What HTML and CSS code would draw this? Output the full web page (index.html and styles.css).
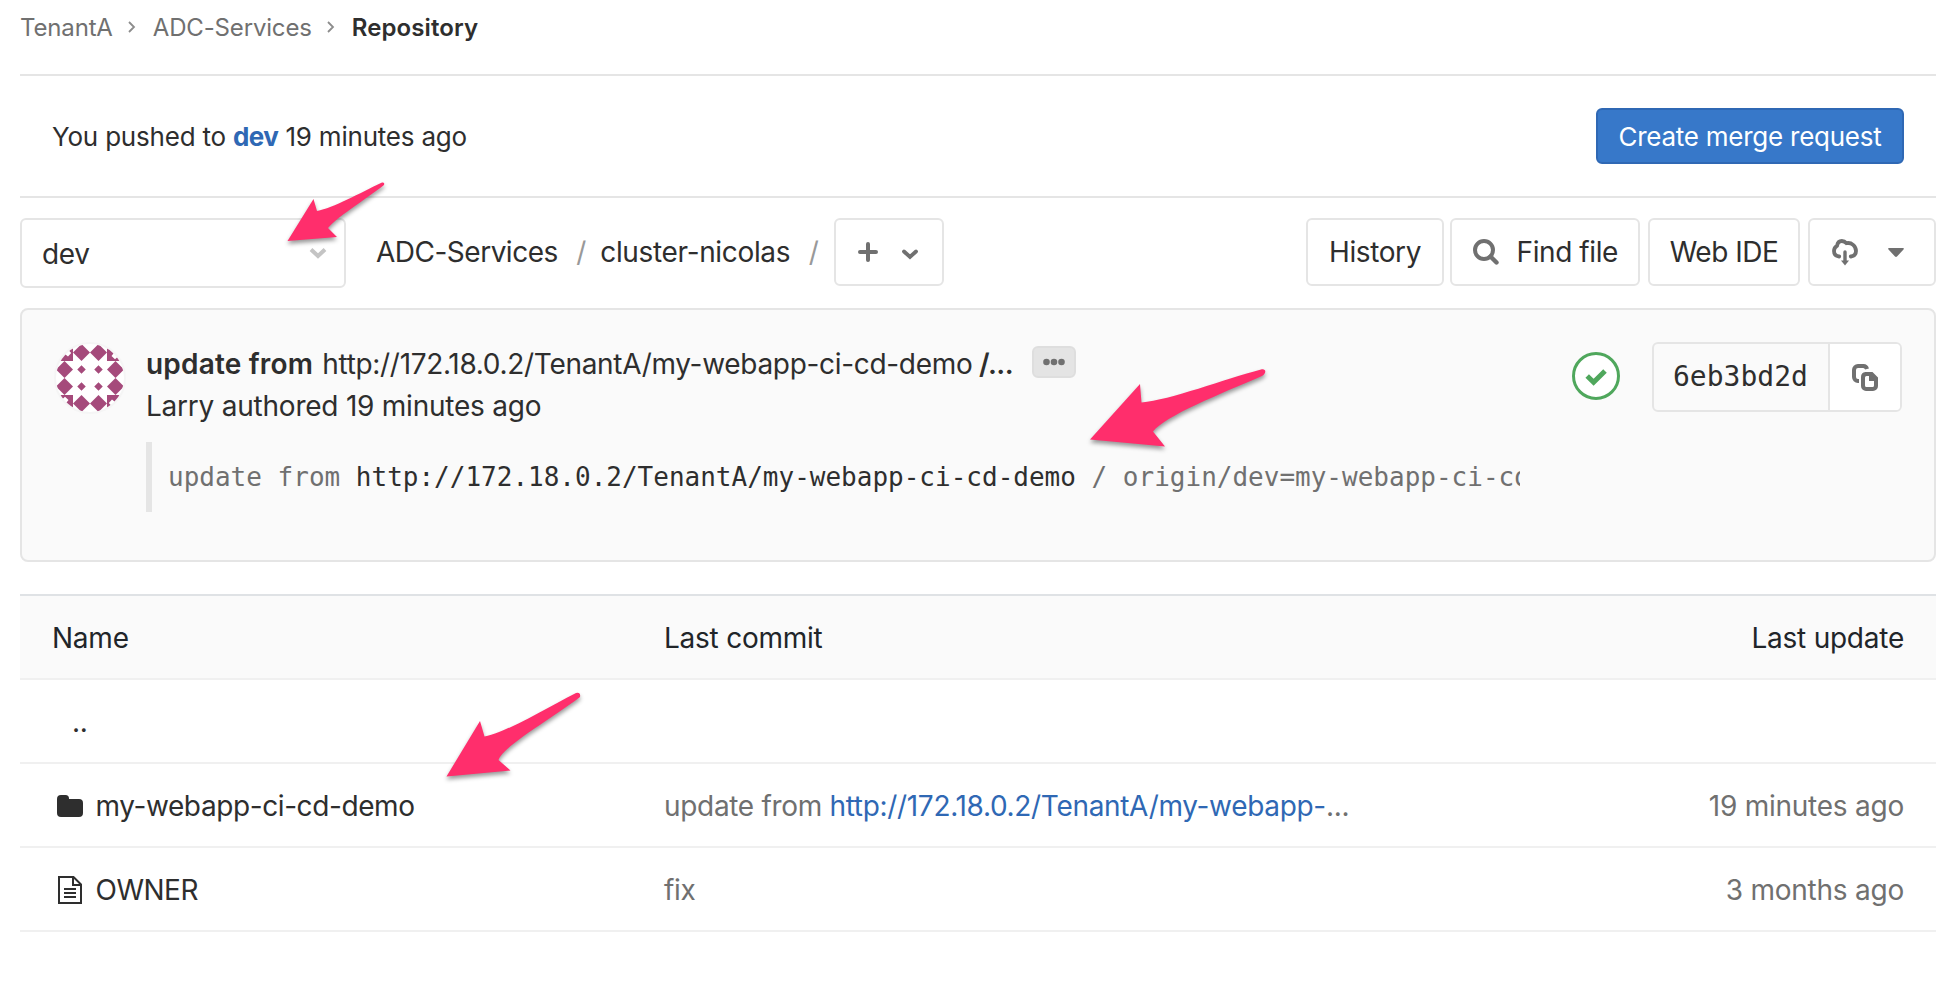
FILE: index.html
```html
<!DOCTYPE html>
<html lang="en">
<head>
<meta charset="utf-8">
<title>Repository</title>
<link rel="stylesheet" href="styles.css">
</head>
<body>
<main class="page">
  <nav class="crumbs">
    <a class="crumb-tenant">TenantA</a>
    <svg class="crumb-sep" width="8" height="12" viewBox="0 0 8 12"><path d="M1 1l5 5-5 5" fill="none" stroke="#8c8c8c" stroke-width="1.8"/></svg>
    <a class="crumb-project">ADC-Services</a>
    <svg class="crumb-sep" width="8" height="12" viewBox="0 0 8 12"><path d="M1 1l5 5-5 5" fill="none" stroke="#8c8c8c" stroke-width="1.8"/></svg>
    <strong class="crumb-current">Repository</strong>
  </nav>

  <section class="push-event">
    <p class="push-text">You pushed to <a class="branch-link">dev</a> 19 minutes ago</p>
    <button class="btn btn-primary">Create merge request</button>
  </section>

  <section class="tree-nav">
    <div class="branch-select"><span class="branch-name">dev</span>
      <svg width="18" height="12" viewBox="0 0 18 12"><path d="M2 2.5l7 6.5 7-6.5" fill="none" stroke="#c4c4c4" stroke-width="4"/></svg>
    </div>
    <div class="path">
      <span class="path-root">ADC-Services</span><span class="slash">/</span><span class="path-dir">cluster-nicolas</span><span class="slash">/</span>
    </div>
    <button class="btn btn-add">
      <svg width="20" height="20" viewBox="0 0 20 20"><path d="M10 2v16M2 10h16" stroke="#707070" stroke-width="4" stroke-linecap="round"/></svg>
      <svg class="chev" width="16" height="11" viewBox="0 0 16 11"><path d="M2 2.5l6 5.5 6-5.5" fill="none" stroke="#707070" stroke-width="3.8" stroke-linecap="round"/></svg>
    </button>
    <div class="actions">
      <button class="btn btn-history">History</button>
      <button class="btn btn-find">
        <svg width="26" height="26" viewBox="0 0 26 26"><circle cx="11" cy="11" r="9" fill="none" stroke="#707070" stroke-width="4"/><path d="M17.5 17.5l6 6" stroke="#707070" stroke-width="4.4" stroke-linecap="round"/></svg>
        <span>Find file</span>
      </button>
      <button class="btn btn-ide">Web IDE</button>
      <button class="btn btn-download">
        <svg width="26" height="27" viewBox="0 0 26 27"><path d="M7.2 17.5C3.8 17 2 14.8 2 12c0-2.400 1.200-4.200 3-5.200C5.600 3.800 7 2 9.800 2c2.400 0 3.800 1.200 4.700 2.200C19.500 3.200 24 7 24 12c0 3-2 5-5.200 5.500" fill="none" stroke="#707070" stroke-width="3.800" stroke-linecap="round"/><path d="M13 13v9" stroke="#707070" stroke-width="3.400" stroke-linecap="round"/><path d="M9 21.500h8l-4 5z" fill="#707070"/></svg>
        <svg class="caret" width="16" height="9" viewBox="0 0 16 9"><path d="M1 0h14q1.500.5.500 1.500L9 8.500q-1 .8-2 0L.5 1.500Q-.5.5 1 0z" fill="#707070"/></svg>
      </button>
    </div>
  </section>

  <section class="commit">
    <svg class="avatar" width="72" height="72" viewBox="-2 -2 72 72">
      <defs>
        <clipPath id="round"><circle cx="34" cy="34" r="34"/></clipPath>
        <path id="dia" d="M8.500 0L17 8.500 8.500 17 0 8.500z"/>
        <path id="dot" d="M8.500 4.250L12.750 8.500 8.500 12.750 4.250 8.500z"/>
        <path id="corner" fill-rule="evenodd" d="M0 0h17v17H0zM12 5.500l3.200 3.500-3.200 3.500L7.500 9z"/>
      </defs>
      <circle cx="34" cy="34" r="35" fill="#fff" stroke="#f5f5f5" stroke-width="2"/>
      <g clip-path="url(#round)" fill="#a54a7b">
        <use href="#corner"/>
        <use href="#corner" transform="rotate(90 34 34)"/>
        <use href="#corner" transform="rotate(180 34 34)"/>
        <use href="#corner" transform="rotate(270 34 34)"/>
        <use href="#dia" x="17"/><use href="#dia" x="34"/>
        <use href="#dia" y="17"/><use href="#dot" x="17" y="17"/><use href="#dot" x="34" y="17"/><use href="#dia" x="51" y="17"/>
        <use href="#dia" y="34"/><use href="#dot" x="17" y="34"/><use href="#dot" x="34" y="34"/><use href="#dia" x="51" y="34"/>
        <use href="#dia" x="17" y="51"/><use href="#dia" x="34" y="51"/>
      </g>
    </svg>
    <div class="commit-body">
      <div class="commit-title">
        <strong class="title-bold">update from</strong>
        <span class="title-url">http://172.18.0.2/TenantA/my-webapp-ci-cd-demo</span>
        <strong class="title-tail">/...</strong>
        <button class="expander"><svg width="24" height="8" viewBox="0 0 24 8"><g fill="#707070"><circle cx="4.500" cy="4" r="3.300"/><circle cx="12" cy="4" r="3.300"/><circle cx="19.500" cy="4" r="3.300"/></g></svg></button>
      </div>
      <div class="commit-author">Larry authored 19 minutes ago</div>
      <pre class="commit-message">update from <b>http://172.18.0.2/TenantA/my-webapp-ci-cd-demo</b> / origin/dev=my-webapp-ci-cd-demo</pre>
    </div>
    <svg class="status" width="48" height="48" viewBox="0 0 48 48"><circle cx="24" cy="24" r="22.500" fill="#fff" stroke="#4fa75c" stroke-width="3"/><path d="M15.200 24l6.400 6.300L33 19" fill="none" stroke="#4fa75c" stroke-width="5"/></svg>
    <div class="sha-group">
      <code class="sha">6eb3bd2d</code>
      <button class="copy">
        <svg width="26" height="27" viewBox="0 0 26 27"><path d="M7 17H6a4 4 0 0 1-4-4V6a4 4 0 0 1 4-4h5a4 4 0 0 1 4 3" fill="none" stroke="#707070" stroke-width="4"/><path fill="#707070" fill-rule="evenodd" d="M13.500 8h7l5.500 5.500V22a5 5 0 0 1-5 5h-7a5 5 0 0 1-5-5v-9a5 5 0 0 1 4.500-5zM14.500 12a1.500 1.500 0 0 0-1.500 1.500v8a1.500 1.500 0 0 0 1.500 1.500h6a1.500 1.500 0 0 0 1.500-1.500V17h-5v-5z"/></svg>
      </button>
    </div>
  </section>

  <table class="tree">
    <thead>
      <tr><th class="col-name">Name</th><th class="col-commit">Last commit</th><th class="col-date">Last update</th></tr>
    </thead>
    <tbody>
      <tr><td class="up">..</td><td></td><td></td></tr>
      <tr>
        <td><div class="entry"><svg width="26" height="22" viewBox="0 0 26 22"><path fill="#2e2e2e" d="M4 0h4.500a3.500 3.500 0 0 1 3.500 3.500V4h10a4 4 0 0 1 4 4v10a4 4 0 0 1-4 4H4a4 4 0 0 1-4-4V4a4 4 0 0 1 4-4z"/></svg><span class="entry-folder">my-webapp-ci-cd-demo</span></div></td>
        <td class="muted">update from <a class="row-link">http://172.18.0.2/TenantA/my-webapp-</a>...</td>
        <td class="muted date">19 minutes ago</td>
      </tr>
      <tr>
        <td><div class="entry"><svg width="26" height="28" viewBox="0 0 26 28"><g fill="none" stroke="#2e2e2e" stroke-width="2"><path d="M2 1h14.500L24 8.500V27H2z"/><path d="M16 1v8h8"/><path d="M7 13h12M7 17h12M7 21h12"/></g></svg><span class="entry-file">OWNER</span></div></td>
        <td class="muted">fix</td>
        <td class="muted date">3 months ago</td>
      </tr>
    </tbody>
  </table>

  <svg class="arrows" width="1942" height="982" viewBox="0 0 1942 982">
    <g fill="#ff2e6c">
      <path d="M287.500 241L313.500 199 317 211C333 208 360 193 382 182.500Q385 182 384 185C362 202 337 217 328 228L337 237z"/>
      <path d="M1090 439.500L1140 384 1141.500 402.500C1170 400 1225 379 1261 369.500C1266 368 1267 373 1262 376C1220 394 1165 416 1153 431.500L1165 446.500z"/>
      <path d="M446.500 776.500L480 721 484.500 736.500C505 733 545 709 576 693Q581 692 580 697C550 720 503 746 498.500 760L510.500 770.500z"/>
    </g>
  </svg>
</main>
</body>
</html>
```
FILE: styles.css
```css
* { box-sizing: border-box; }
body { margin: 0; background: #fff; color: #2e2e2e; font-family: Inter, "Liberation Sans", sans-serif; font-size: 28px; }
button { font: inherit; color: inherit; margin: 0; padding: 0; }
svg { display: block; flex: none; }
.page { width: 1942px; height: 982px; padding: 0 6px 0 20px; overflow: hidden; position: relative; }

.crumbs { display: flex; align-items: center; height: 76px; padding-bottom: 20px; border-bottom: 2px solid #e5e5e5; font-size: 24px; color: #707070; white-space: nowrap; letter-spacing: -.16px; }
.crumb-sep { margin: 0 17px 0 15px; }
.crumb-current { color: #2e2e2e; font-weight: 600; letter-spacing: .1px; }

.push-event { display: flex; align-items: center; justify-content: space-between; height: 122px; padding: 0 32px; border-bottom: 2px solid #e5e5e5; font-size: 26px; }
.push-text { margin: 0; white-space: nowrap; letter-spacing: -.2px; }
.branch-link { color: #2f68b4; font-weight: 700; letter-spacing: -.6px; }
.btn { display: flex; align-items: center; height: 68px; border: 2px solid #e5e5e5; border-radius: 6px; background: #fff; white-space: nowrap; letter-spacing: -.4px; }
.btn-primary { width: 308px; height: 56px; justify-content: center; background: #3778c9; border-color: #2f68b4; color: #fff; letter-spacing: -.25px; }

.tree-nav { display: flex; height: 110px; padding-top: 20px; align-items: flex-start; }
.branch-select { display: flex; align-items: center; justify-content: space-between; width: 326px; height: 70px; padding: 0 17px 0 20px; border: 2px solid #e5e5e5; border-radius: 6px; }
.branch-name { padding-top: 2px; letter-spacing: -.3px; }
.path { display: flex; align-items: center; width: 488px; height: 68px; padding-left: 30px; white-space: nowrap; }
.path-root { letter-spacing: -.5px; }
.path-dir { letter-spacing: -.34px; }
.slash { width: 42.5px; padding-left: 18.5px; color: #999; }
.btn-add { width: 110px; padding-left: 22px; gap: 24px; }
.chev { margin-top: 5px; }
.actions { display: flex; margin-left: auto; }
.btn-history { width: 138px; justify-content: center; margin-right: 6px; }
.btn-find { width: 190px; padding-left: 21px; gap: 17.5px; margin-right: 8px; }
.btn-ide { width: 152px; justify-content: center; margin-right: 8px; letter-spacing: -.5px; }
.btn-download { width: 128px; padding-left: 22px; gap: 30px; }
.caret { margin-top: 1px; }

.commit { display: flex; height: 254px; padding: 32px 32px 0 32px; border: 2px solid #e5e5e5; border-radius: 8px; background: #fafafa; }
.avatar { margin: 0 20px 0 0; }
.commit-body { width: 1374px; padding-top: 1px; }
.commit-title { display: flex; align-items: center; height: 42px; white-space: nowrap; }
.title-bold, .title-tail { font-weight: 600; }
.title-bold { margin-right: 9px; letter-spacing: .2px; }
.title-url { margin-right: 6.5px; letter-spacing: -.31px; }
.title-tail { letter-spacing: -.5px; }
.expander { display: flex; align-items: center; justify-content: center; width: 44px; height: 32px; margin: -4px 0 0 19px; border: 2px solid #dedede; border-radius: 6px; background: #e4e4e4; }
.commit-author { height: 42px; line-height: 42px; white-space: nowrap; letter-spacing: -.23px; }
.commit-message { height: 70px; margin: 15px 0 0; padding-left: 16px; border-left: 6px solid #e5e5e5; overflow: hidden; color: #707070; font: 26px/70px "DejaVu Sans Mono", monospace; }
.commit-message b { font-weight: 400; color: #2e2e2e; }
.status { margin: 10px 32px 0 52px; }
.sha-group { display: flex; width: 250px; height: 70px; border: 2px solid #e5e5e5; border-radius: 6px; overflow: hidden; }
.sha { width: 174px; padding-left: 19px; font: 28px/66px "DejaVu Sans Mono", monospace; }
.copy { flex: 1; display: flex; align-items: center; justify-content: center; border: 0; border-left: 2px solid #e5e5e5; background: #fff; }

.tree { width: 1916px; margin-top: 32px; border-collapse: separate; border-spacing: 0; table-layout: fixed; border-top: 2px solid #dfe2e5; letter-spacing: -.24px; }
.tree th, .tree td { height: 84px; padding: 2px 32px 0; border-bottom: 2px solid #f0f0f0; text-align: left; font-weight: 400; line-height: 40px; white-space: nowrap; }
.tree th { background: #fafafa; color: #212529; }
.col-name { width: 612px; }
.col-date { width: 400px; }
.tree th.col-date, .tree td.date { text-align: right; }
.tree td.up { padding-left: 52px; }
.entry { display: flex; align-items: center; gap: 12.5px; padding-left: 5px; }
.entry-folder { letter-spacing: -.4px; }
.entry-file { letter-spacing: -.5px; }
.muted { color: #707070; letter-spacing: -.32px; }
.tree td.date { letter-spacing: -.24px; }
.row-link { color: #2f68b4; }

.arrows { position: absolute; left: 0; top: 0; pointer-events: none; filter: drop-shadow(0 3px 2px rgba(0,0,0,.4)); }
```
